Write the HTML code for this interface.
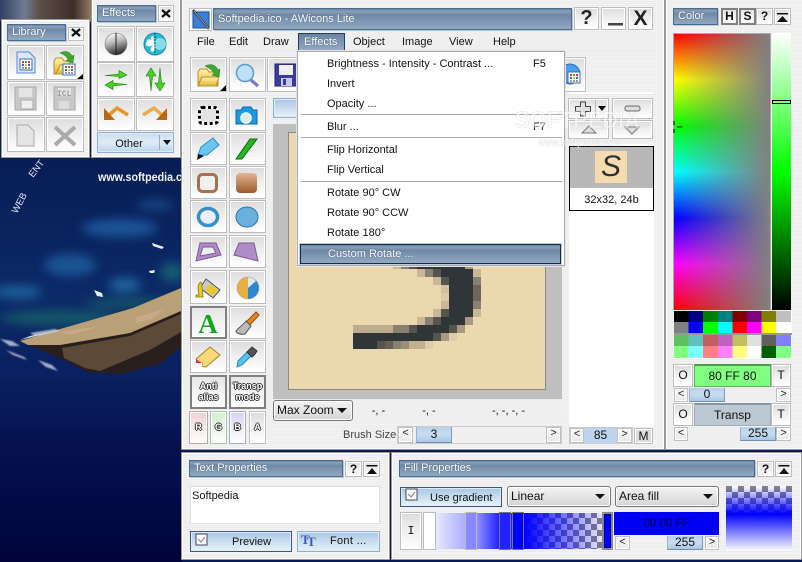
<!DOCTYPE html>
<html><head><meta charset="utf-8"><title>AWicons Lite</title>
<style>
html,body{margin:0;padding:0;width:802px;height:562px;overflow:hidden;background:#0a1a55}
body{position:relative;font:11px/14px "Liberation Sans",sans-serif;color:#111}
div,span.a{position:absolute;box-sizing:border-box}
.p{background:repeating-linear-gradient(#ececec 0 1px,#f3f3f3 1px 2px);border:1px solid #999;box-shadow:inset 0 0 0 1px #fff}
.b{background:linear-gradient(#dcdcdc,#ececec 40%,#fff);border:1px solid #bdbdbd;box-shadow:inset 0 0 0 1px #fff;text-align:center}
.d{border:2px solid #808080;box-shadow:none;background:linear-gradient(#e6e6e6,#fff)}
.t{background:linear-gradient(#6a84a2,#8ba0b8 12%,#6f88a6 30%,#7f97b2 60%,#93a8c0);border:1px solid #4a6c8f;box-shadow:1px 1px 0 #b8c8d8;color:#fff;padding-left:4px;text-shadow:0 0 1px #2b4a6c;white-space:nowrap;overflow:hidden}
.s{background:#efefef}
.ar{background:linear-gradient(#f8f8f8,#e8e8e8);border:1px solid #c0c0c0;box-shadow:inset 0 0 0 1px #fff;text-align:center;font-family:"Liberation Mono",monospace;font-size:11px;line-height:13px;color:#222}
.th{background:linear-gradient(#b9d2ea,#c9dcf0 50%,#aac6e4);border-bottom:1px solid #6f90b4;border-left:1px solid #aac;border-right:1px solid #7d9cbc;text-align:center;font-size:12px;line-height:14px}
.bl{background:linear-gradient(#a9c6e4,#cfe1f0 60%,#e6f3fa);border:1px solid #8fb0cc;box-shadow:inset 0 0 0 1px #dcebf6;text-align:center}
.cb{background:linear-gradient(#f4f4f4,#d4d4d4);border:1px solid #777;border-radius:3px;box-shadow:inset 0 0 0 1px #fff;padding-left:3px;font-size:12px;line-height:19px}
.cb i{position:absolute;right:5px;top:7px;width:0;height:0;border:5px solid transparent;border-top:5px solid #111;border-bottom:0}
.m{left:29px;white-space:nowrap}
.sep{left:3px;width:261px;height:1px;background:#aaa}
.o{color:#fff;font-weight:bold;font-size:9px;line-height:11px;text-shadow:-1px 0 0 #333,1px 0 0 #333,0 -1px 0 #333,0 1px 0 #333}
.tb{font-weight:bold;font-family:"Liberation Sans",sans-serif;font-size:14px;line-height:14px}
</style></head><body>

<!-- desktop wallpaper -->
<svg width="802" height="562" style="position:absolute;left:0;top:0">
<defs>
<linearGradient id="w" x1="0" y1="0" x2="0" y2="1"><stop offset="0" stop-color="#071c54"/><stop offset=".36" stop-color="#0c2a68"/><stop offset=".55" stop-color="#0a2060"/><stop offset=".73" stop-color="#051050"/><stop offset="1" stop-color="#00043a"/></linearGradient>
<filter id="bl" color-interpolation-filters="sRGB"><feGaussianBlur stdDeviation="5"/></filter><filter id="bs" color-interpolation-filters="sRGB"><feGaussianBlur stdDeviation=".7"/></filter>
<linearGradient id="rk" x1="0" y1="0" x2="1" y2="0"><stop offset="0" stop-color="#2f3f60"/><stop offset=".25" stop-color="#6f7c92"/><stop offset=".4" stop-color="#5c5048"/><stop offset=".75" stop-color="#3f2c2c"/><stop offset="1" stop-color="#b09a70"/></linearGradient>
</defs>
<rect x="0" y="150" width="182" height="412" fill="url(#w)"/>
<rect x="0" y="0" width="98" height="22" fill="url(#rk)"/>
<g filter="url(#bl)">
<ellipse cx="70" cy="265" rx="26" ry="11" fill="#1f5fa0" opacity=".8"/>
<ellipse cx="120" cy="228" rx="38" ry="9" fill="#1f62a4" opacity=".8"/>
<ellipse cx="155" cy="205" rx="18" ry="5" fill="#1f5a98" opacity=".7"/>
<ellipse cx="125" cy="285" rx="16" ry="7" fill="#2470a8" opacity=".85"/>
<ellipse cx="18" cy="292" rx="24" ry="7" fill="#1f66a0" opacity=".85"/>
<ellipse cx="60" cy="318" rx="60" ry="8" fill="#15566a"/>
<ellipse cx="130" cy="303" rx="45" ry="5" fill="#15566a"/>
<ellipse cx="172" cy="272" rx="12" ry="10" fill="#165a74"/>
</g>
<path d="M20 341L67 327 133 308 181 288V347L160 364 120 374 87 372 60 358 38 349Z" fill="#2a1e1c"/>
<path d="M20 341L67 327 133 308 181 288V311L130 333 60 345 28 345Z" fill="#b9a076"/>
<path d="M135 318l30-10-10 10-18 5zM60 332l40-6-30 9z" fill="#c8a888"/>
<path d="M62 348L130 336 181 314V332L150 350 100 371 85 368 64 358Z" fill="#5c4a38"/>
<g fill="#c8d4de" filter="url(#bs)" opacity=".8"><path d="M0 339l12 2 8 5-10 0z"/><path d="M6 350l18 7 3 3-14-5z"/><path d="M38 360l14 5 6 6-12-4z"/><path d="M30 333l25-4 5 2-25 5z"/></g>
<path d="M20 340L60 330 30 336Z" fill="#dde"/>
<g fill="#e8eef2"><path d="M94 290l8 3 1 4-6-1z"/><path d="M152 243l12 4-2 2-9-3z"/><path d="M149 271l6-1-1 3-4 0z"/></g>
<text x="98" y="181" fill="#fff" font-family="Liberation Sans" font-size="12" font-weight="bold" textLength="100" lengthAdjust="spacingAndGlyphs" opacity=".95">www.softpedia.com</text>
<text transform="translate(17,214) rotate(-62)" fill="#dfe6f0" font-family="Liberation Sans" font-size="9.5">WEB</text>
<text transform="translate(33,178) rotate(-52)" fill="#dfe6f0" font-family="Liberation Sans" font-size="9.5">ENT</text>
</svg>

<!-- Library panel -->
<div class="p" style="left:1px;top:19px;width:89px;height:139px"></div>
<div class="t" style="left:7px;top:24px;width:59px;height:17px">Library</div>
<div class="b" style="left:68px;top:27px;width:16px;height:14px"></div>
<div class="b" style="left:7px;top:45px;width:38px;height:35px"></div>
<div class="b" style="left:46px;top:45px;width:38px;height:35px"></div>
<div class="b" style="left:7px;top:81px;width:38px;height:35px"></div>
<div class="b" style="left:46px;top:81px;width:38px;height:35px"></div>
<div class="b" style="left:7px;top:117px;width:38px;height:35px"></div>
<div class="b" style="left:46px;top:117px;width:38px;height:35px"></div>

<!-- Effects panel -->
<div class="p" style="left:91px;top:-2px;width:90px;height:160px"></div>
<div class="t" style="left:97px;top:5px;width:59px;height:17px">Effects</div>
<div class="b" style="left:158px;top:5px;width:16px;height:17px"></div>
<div class="b" style="left:97px;top:26px;width:38px;height:36px"></div>
<div class="b" style="left:136px;top:26px;width:38px;height:36px"></div>
<div class="b" style="left:97px;top:62px;width:38px;height:35px"></div>
<div class="b" style="left:136px;top:62px;width:38px;height:35px"></div>
<div class="b" style="left:97px;top:98px;width:38px;height:33px"></div>
<div class="b" style="left:136px;top:98px;width:38px;height:33px"></div>
<div class="bl" style="left:97px;top:132px;width:77px;height:21px;line-height:20px;background:linear-gradient(#c9def0,#dfecf6 50%,#b9d2e9)"><span style="position:absolute;left:0;width:62px;text-align:center;top:1px">Other</span></div>
<div style="left:159px;top:135px;width:1px;height:15px;background:#8fb0cc"></div>

<!-- main window -->
<div class="p" style="left:181px;top:-2px;width:484px;height:452px"></div>
<div class="b" style="left:189px;top:8px;width:23px;height:23px"></div>
<div class="t" style="left:213px;top:8px;width:359px;height:22px;line-height:20px;font-size:11px">Softpedia.ico - AWicons Lite</div>
<div class="b" style="left:574px;top:7px;width:25px;height:23px;font:bold 20px/21px 'Liberation Sans';color:#222">?</div>
<div class="b" style="left:601px;top:7px;width:25px;height:23px"></div>
<div class="b" style="left:628px;top:7px;width:25px;height:23px;font:bold 21px/21px 'Liberation Sans';color:#222">X</div>
<div class="s" style="left:190px;top:32px;width:462px;height:19px"></div>
<span class="a" style="left:197px;top:35px">File</span>
<span class="a" style="left:229px;top:35px">Edit</span>
<span class="a" style="left:263px;top:35px">Draw</span>
<div class="t" style="left:298px;top:33px;width:47px;height:18px;border:1px solid #1e3e62;padding-left:5px;line-height:16px;box-shadow:none;background:linear-gradient(#6a84a2,#7f97b2 50%,#93a8c0)">Effects</div>
<span class="a" style="left:353px;top:35px">Object</span>
<span class="a" style="left:402px;top:35px">Image</span>
<span class="a" style="left:449px;top:35px">View</span>
<span class="a" style="left:493px;top:35px">Help</span>

<!-- top toolbar -->
<div class="b" style="left:190px;top:57px;width:37px;height:35px"></div>
<div class="b" style="left:229px;top:57px;width:37px;height:35px"></div>
<div class="b" style="left:267px;top:57px;width:38px;height:35px"></div>
<div class="b" style="left:548px;top:57px;width:38px;height:35px"></div>

<!-- tools -->
<div class="b" style="left:190px;top:98px;width:37px;height:33px"></div><div class="b" style="left:229px;top:98px;width:37px;height:33px"></div>
<div class="b" style="left:190px;top:132px;width:37px;height:33px"></div><div class="b" style="left:229px;top:132px;width:37px;height:33px"></div>
<div class="b" style="left:190px;top:166px;width:37px;height:33px"></div><div class="b" style="left:229px;top:166px;width:37px;height:33px"></div>
<div class="b" style="left:190px;top:200px;width:37px;height:33px"></div><div class="b" style="left:229px;top:200px;width:37px;height:33px"></div>
<div class="b" style="left:190px;top:235px;width:37px;height:33px"></div><div class="b" style="left:229px;top:235px;width:37px;height:33px"></div>
<div class="b" style="left:190px;top:270px;width:37px;height:34px"></div><div class="b" style="left:229px;top:270px;width:37px;height:34px"></div>
<div class="b d" style="left:190px;top:306px;width:37px;height:33px"></div><div class="b" style="left:229px;top:306px;width:37px;height:33px"></div>
<div class="b" style="left:190px;top:340px;width:37px;height:33px"></div><div class="b" style="left:229px;top:340px;width:37px;height:33px"></div>
<div class="b d o" style="left:190px;top:375px;width:37px;height:34px;padding-top:4px">Anti<br>alias</div>
<div class="b d o" style="left:229px;top:375px;width:37px;height:34px;padding-top:4px">Transp<br>mode</div>
<div class="b o" style="left:189px;top:411px;width:19px;height:33px;padding-top:10px;background:linear-gradient(#f0d0d0,#fff);border-color:#c8a0a0">R</div>
<div class="b o" style="left:210px;top:411px;width:17px;height:33px;padding-top:10px;background:linear-gradient(#d0f0d0,#fff);border-color:#a8c8a8">G</div>
<div class="b o" style="left:229px;top:411px;width:17px;height:33px;padding-top:10px;background:linear-gradient(#d4d4f0,#fff);border-color:#a8a8c8">B</div>
<div class="b o" style="left:249px;top:411px;width:17px;height:33px;padding-top:10px">A</div>

<!-- canvas -->
<div class="bl" style="left:273px;top:98px;width:100px;height:20px"></div>
<div style="left:273px;top:124px;width:289px;height:275px;background:#bfbfbf"></div>
<div style="left:288px;top:132px;width:258px;height:258px;background:#ecd8ae;border:1px solid #8a8a80"></div>
<svg width="802" height="562" style="position:absolute;left:0;top:0" shape-rendering="crispEdges">
<g fill="#303538">
<rect x="417" y="261" width="48" height="8"/><rect x="441" y="269" width="32" height="8"/><rect x="449" y="277" width="24" height="40"/><rect x="441" y="317" width="24" height="8"/><rect x="417" y="325" width="32" height="8"/><rect x="353" y="333" width="80" height="8"/><rect x="353" y="341" width="24" height="8"/>
</g>
<g fill="#c9b795">
<rect x="393" y="261" width="8" height="8"/><rect x="417" y="269" width="8" height="8"/><rect x="433" y="277" width="8" height="8"/><rect x="441" y="285" width="8" height="8" opacity=".7"/><rect x="441" y="293" width="8" height="8" opacity=".4"/><rect x="441" y="301" width="8" height="8"/><rect x="433" y="309" width="8" height="8"/><rect x="417" y="317" width="8" height="8"/><rect x="473" y="269" width="8" height="8"/><rect x="473" y="309" width="8" height="8"/><rect x="409" y="341" width="8" height="8" fill="#c3b090"/>
</g>
<rect x="353" y="325" width="40" height="8" fill="#bdad8e"/>
<g fill="#8a8070">
<rect x="401" y="261" width="8" height="8"/><rect x="425" y="269" width="8" height="8"/><rect x="473" y="277" width="8" height="8"/><rect x="473" y="301" width="8" height="8"/><rect x="425" y="317" width="8" height="8"/><rect x="393" y="325" width="16" height="8"/><rect x="401" y="341" width="8" height="8" fill="#9a8e78"/><rect x="393" y="341" width="8" height="8"/>
</g>
<g fill="#a89a80"><rect x="465" y="261" width="8" height="8"/><rect x="465" y="317" width="8" height="8"/><rect x="457" y="325" width="8" height="8"/><rect x="441" y="333" width="8" height="8"/></g>
<g fill="#56544e">
<rect x="409" y="261" width="8" height="8"/><rect x="433" y="269" width="8" height="8"/><rect x="441" y="277" width="8" height="8"/><rect x="441" y="309" width="8" height="8"/><rect x="433" y="317" width="8" height="8"/><rect x="409" y="325" width="8" height="8"/><rect x="449" y="325" width="8" height="8"/><rect x="433" y="333" width="8" height="8"/><rect x="377" y="341" width="8" height="8"/>
</g>
<rect x="473" y="285" width="8" height="16" fill="#6b675c"/>
<rect x="385" y="341" width="8" height="8" fill="#666055"/><rect x="377" y="341" width="8" height="8" fill="#56544e"/>
<rect x="449" y="333" width="8" height="8" fill="#dfcba5"/><rect x="417" y="341" width="8" height="8" fill="#c3b090"/><rect x="425" y="341" width="8" height="8" fill="#dfcba5"/>
</svg>

<!-- statusbar -->
<div class="cb" style="left:273px;top:400px;width:80px;height:21px">Max Zoom<i></i></div>
<div class="s" style="left:354px;top:400px;width:49px;height:21px;text-align:center;line-height:22px">-, -</div>
<div class="s" style="left:404px;top:400px;width:50px;height:21px;text-align:center;line-height:22px">-, -</div>
<div class="s" style="left:455px;top:400px;width:107px;height:21px;text-align:center;line-height:22px">-, -, -, -</div>
<span class="a" style="left:343px;top:428px;color:#444;font-size:11px">Brush Size</span>
<div class="s" style="left:397px;top:426px;width:165px;height:18px;border:1px solid #ccc"></div>
<div class="ar" style="left:398px;top:427px;width:15px;height:16px">&lt;</div>
<div class="th" style="left:416px;top:427px;width:36px;height:16px">3</div>
<div class="ar" style="left:546px;top:427px;width:15px;height:16px">&gt;</div>

<!-- right list -->
<div style="left:569px;top:92px;width:85px;height:335px;background:#fff"></div>
<div class="p" style="left:566px;top:94px;width:90px;height:50px;border:0;box-shadow:none"></div>
<div class="b" style="left:568px;top:98px;width:41px;height:21px"></div>
<div class="b" style="left:612px;top:98px;width:41px;height:21px"></div>
<div class="b" style="left:568px;top:120px;width:41px;height:19px"></div>
<div class="b" style="left:612px;top:120px;width:41px;height:19px"></div>
<div style="left:569px;top:146px;width:85px;height:65px;background:#fff;border:1px solid #000"></div>
<div style="left:570px;top:147px;width:83px;height:41px;background:#b8b8b8"></div>
<div style="left:595px;top:151px;width:32px;height:32px;background:#f5dbae;font:italic 30px/32px 'Liberation Sans';text-align:center;color:#2d3034">S</div>
<div style="left:570px;top:193px;width:83px;text-align:center;font-size:11px">32x32, 24b</div>
<div class="s" style="left:569px;top:427px;width:64px;height:17px;border:1px solid #ccc"></div>
<div class="ar" style="left:570px;top:428px;width:14px;height:15px">&lt;</div>
<div style="left:584px;top:428px;width:33px;height:15px;background:#bcd4ee;text-align:center;font-size:12px;line-height:15px">85</div>
<div class="ar" style="left:617px;top:428px;width:15px;height:15px">&gt;</div>
<div class="b" style="left:634px;top:428px;width:19px;height:16px;background:#dcdcdc;font-size:12px;line-height:14px">M</div>

<!-- Color panel -->
<div class="p" style="left:665px;top:-2px;width:139px;height:452px"></div>
<div class="t" style="left:673px;top:8px;width:45px;height:17px">Color</div>
<div class="b d tb" style="left:721px;top:8px;width:17px;height:17px;font-size:12px;line-height:13px">H</div>
<div class="b d tb" style="left:739px;top:8px;width:17px;height:17px;font-size:12px;line-height:13px">S</div>
<div class="b tb" style="left:756px;top:8px;width:17px;height:17px;font-size:12px;line-height:15px">?</div>
<div class="b" style="left:774px;top:8px;width:17px;height:17px"></div>
<div style="left:673px;top:33px;width:98px;height:277px;background:linear-gradient(90deg,transparent,#808080),linear-gradient(#f00,#ff0 16.6%,#0f0 33.3%,#0ff 50%,#00f 66.6%,#f0f 83.3%,#f00);border:1px solid #aaa;border-width:1px 1px 0 1px"></div>
<div style="left:772px;top:33px;width:19px;height:277px;background:linear-gradient(#fff,#0f0 50%,#000)"></div>
<div style="left:772px;top:100px;width:19px;height:4px;border:1px solid #000;background:#80ff80"></div>
<svg width="10" height="14" style="position:absolute;left:673px;top:120px"><path d="M1 1v4M1 9v4M4 7h5" stroke="#000" fill="none"/></svg>
<!-- palette -->
<svg width="118" height="48" style="position:absolute;left:674px;top:311px" shape-rendering="crispEdges">
<rect width="118" height="48" fill="#fff"/>
<g><rect x="0" width="15" height="11" fill="#000"/><rect x="14.6" width="15" height="11" fill="#000080"/><rect x="29.2" width="15" height="11" fill="#008000"/><rect x="43.8" width="15" height="11" fill="#008080"/><rect x="58.4" width="15" height="11" fill="#800000"/><rect x="73" width="15" height="11" fill="#800080"/><rect x="87.6" width="15" height="11" fill="#808000"/><rect x="102.2" width="15" height="11" fill="#c0c0c0"/></g>
<g transform="translate(0,11)"><rect x="0" width="15" height="11" fill="#808080"/><rect x="14.6" width="15" height="11" fill="#00f"/><rect x="29.2" width="15" height="11" fill="#0f0"/><rect x="43.8" width="15" height="11" fill="#0ff"/><rect x="58.4" width="15" height="11" fill="#f00"/><rect x="73" width="15" height="11" fill="#f0f"/><rect x="87.6" width="15" height="11" fill="#ff0"/><rect x="102.2" width="15" height="11" fill="#fff"/></g>
<rect y="22" width="118" height="2" fill="#999"/>
<g transform="translate(0,24)"><rect x="0" width="15" height="11" fill="#60c060"/><rect x="14.6" width="15" height="11" fill="#60c0c0"/><rect x="29.2" width="15" height="11" fill="#c06060"/><rect x="43.8" width="15" height="11" fill="#c060c0"/><rect x="58.4" width="15" height="11" fill="#c0c060"/><rect x="73" width="15" height="11" fill="#e0e0e0"/><rect x="87.6" width="15" height="11" fill="#606060"/><rect x="102.2" width="15" height="11" fill="#8080ff"/></g>
<g transform="translate(0,35)"><rect x="0" width="15" height="12" fill="#80ff80"/><rect x="14.6" width="15" height="12" fill="#80ffff"/><rect x="29.2" width="15" height="12" fill="#ff8080"/><rect x="43.8" width="15" height="12" fill="#ff80ff"/><rect x="58.4" width="15" height="12" fill="#ffff80"/><rect x="73" width="15" height="12" fill="#fff"/><rect x="87.6" width="15" height="12" fill="#006000"/><rect x="102.2" width="15" height="12" fill="#80ff80"/></g>
</svg>
<div class="b" style="left:673px;top:364px;width:20px;height:23px;font-size:12px;line-height:20px">O</div>
<div style="left:694px;top:364px;width:77px;height:23px;background:#80ff80;border:1px solid #60b060;border-top:2px solid #4d9a4d;text-align:center;font-size:12px;line-height:21px">80 FF 80</div>
<div class="b" style="left:771px;top:364px;width:20px;height:23px;font-size:12px;line-height:20px">T</div>
<div class="s" style="left:673px;top:388px;width:118px;height:14px"></div>
<div class="ar" style="left:674px;top:388px;width:14px;height:14px;line-height:12px">&lt;</div>
<div class="th" style="left:689px;top:388px;width:36px;height:14px;line-height:13px">0</div>
<div class="ar" style="left:776px;top:388px;width:15px;height:14px;line-height:12px">&gt;</div>
<div class="b" style="left:673px;top:403px;width:20px;height:23px;font-size:12px;line-height:20px">O</div>
<div style="left:694px;top:403px;width:77px;height:23px;background:#bcc8d2;border:1px solid #a0acb8;border-top:2px solid #8595a5;text-align:center;font-size:12px;line-height:21px">Transp</div>
<div class="b" style="left:771px;top:403px;width:20px;height:23px;font-size:12px;line-height:20px">T</div>
<div class="s" style="left:673px;top:427px;width:118px;height:14px"></div>
<div class="ar" style="left:674px;top:427px;width:14px;height:14px;line-height:12px">&lt;</div>
<div class="th" style="left:740px;top:427px;width:36px;height:14px;line-height:13px">255</div>
<div class="ar" style="left:776px;top:427px;width:15px;height:14px;line-height:12px">&gt;</div>

<!-- Text Properties -->
<div class="p" style="left:181px;top:452px;width:209px;height:108px"></div>
<div class="t" style="left:189px;top:460px;width:154px;height:17px">Text Properties</div>
<div class="b tb" style="left:345px;top:461px;width:17px;height:16px;font-size:12px;line-height:14px">?</div>
<div class="b" style="left:363px;top:461px;width:17px;height:16px"></div>
<div style="left:190px;top:486px;width:190px;height:38px;background:#fff;border:1px solid #e0e0e0;padding:2px 1px;font-size:11px">Softpedia</div>
<div class="bl" style="left:190px;top:531px;width:102px;height:21px;border:1px solid #3a5a78;background:linear-gradient(#a9c6e4,#d0e2f0 60%,#e6f3fa)"><span style="position:absolute;left:41px;top:3px;white-space:nowrap">Preview</span></div>
<div class="bl" style="left:297px;top:531px;width:83px;height:21px"><span style="position:absolute;left:32px;top:2px;white-space:nowrap;letter-spacing:.3px">Font ...</span></div>

<!-- Fill Properties -->
<div class="p" style="left:391px;top:452px;width:411px;height:108px"></div>
<div class="t" style="left:399px;top:460px;width:356px;height:17px">Fill Properties</div>
<div class="b tb" style="left:757px;top:461px;width:17px;height:16px;font-size:12px;line-height:14px">?</div>
<div class="b" style="left:775px;top:461px;width:17px;height:16px"></div>
<div class="bl" style="left:400px;top:487px;width:102px;height:20px;border:1px solid #3a5a78;background:linear-gradient(#a9c6e4,#d0e2f0 60%,#e6f3fa)"><span style="position:absolute;left:29px;top:3px;white-space:nowrap">Use gradient</span></div>
<div class="cb" style="left:507px;top:486px;width:104px;height:21px">Linear<i></i></div>
<div class="cb" style="left:615px;top:486px;width:104px;height:21px">Area fill<i></i></div>
<svg width="66" height="65" style="position:absolute;left:726px;top:486px" shape-rendering="crispEdges">
<defs><pattern id="ck" width="12" height="12" patternUnits="userSpaceOnUse"><rect width="12" height="12" fill="#fff"/><rect width="6" height="6" fill="#888"/><rect x="6" y="6" width="6" height="6" fill="#888"/></pattern>
<linearGradient id="vg" x1="0" y1="0" x2="0" y2="1"><stop offset="0" stop-color="#00f" stop-opacity="0"/><stop offset="1" stop-color="#00f"/></linearGradient>
<linearGradient id="vg2" x1="0" y1="0" x2="0" y2="1"><stop offset="0" stop-color="#00f"/><stop offset="1" stop-color="#fff"/></linearGradient></defs>
<rect width="66" height="28" fill="url(#ck)"/><rect width="66" height="28" fill="url(#vg)"/>
<rect y="28" width="66" height="37" fill="url(#vg2)"/>
</svg>
<div class="b tb" style="left:400px;top:512px;width:22px;height:38px;font:12px/36px 'Liberation Mono'">I</div>
<svg width="192" height="39" style="position:absolute;left:423px;top:512px" shape-rendering="crispEdges">
<defs><linearGradient id="g1" x1="0" y1="0" x2="1" y2="0"><stop offset="0" stop-color="#e8e8ff"/><stop offset="1" stop-color="#aaaaff"/></linearGradient><linearGradient id="g2" x1="0" y1="0" x2="1" y2="0"><stop offset="0" stop-color="#9090ff"/><stop offset="1" stop-color="#2222ff"/></linearGradient>
<linearGradient id="g3" x1="0" y1="0" x2="1" y2="0"><stop offset="0" stop-color="#00f"/><stop offset="1" stop-color="#00f" stop-opacity=".1"/></linearGradient>
<pattern id="ck2" width="12" height="12" patternUnits="userSpaceOnUse"><rect width="12" height="12" fill="#fff"/><rect width="6" height="6" fill="#888"/><rect x="6" y="6" width="6" height="6" fill="#888"/></pattern></defs>
<rect x=".5" y=".5" width="12" height="37" fill="#fff" stroke="#bbb"/>
<rect x="13" y="1" width="30" height="36" fill="url(#g1)"/>
<rect x="42.5" y=".5" width="11" height="37" fill="#8888ff" stroke="#bbb"/>
<rect x="54" y="1" width="22" height="36" fill="url(#g2)"/>
<rect x="76.5" y=".5" width="11" height="37" fill="#2222ff" stroke="#777"/>
<rect x="88" y="1" width="1" height="36" fill="#2222ff"/>
<rect x="89.5" y=".5" width="11" height="37" fill="#0000ff" stroke="#777"/>
<rect x="101" y="1" width="78" height="36" fill="url(#ck2)"/>
<rect x="101" y="1" width="78" height="36" fill="url(#g3)"/>
<rect x="179.5" y=".5" width="10" height="37" fill="#fff" stroke="#888"/>
<rect x="181" y="2" width="7" height="34" fill="#00f" stroke="#003"/>
</svg>
<div style="left:614px;top:512px;width:105px;height:23px;background:#0000f4;text-align:center;font-size:11.5px;line-height:24px;color:#000048">00 00 FF</div>
<div class="ar" style="left:615px;top:536px;width:15px;height:14px;line-height:12px">&lt;</div>
<div class="th" style="left:667px;top:536px;width:36px;height:14px;line-height:13px">255</div>
<div class="ar" style="left:705px;top:536px;width:14px;height:14px;line-height:12px">&gt;</div>

<!-- icons overlay -->
<svg width="802" height="562" style="position:absolute;left:0;top:0">
<defs>
<linearGradient id="sil" x1=".3" y1="0" x2=".6" y2="1"><stop offset="0" stop-color="#fff"/><stop offset=".4" stop-color="#bbb"/><stop offset="1" stop-color="#222"/></linearGradient>
<linearGradient id="fol" x1="0" y1="0" x2="0" y2="1"><stop offset="0" stop-color="#fff2a8"/><stop offset="1" stop-color="#e2b23a"/></linearGradient>
<linearGradient id="brn" x1="0" y1="0" x2="0" y2="1"><stop offset="0" stop-color="#e4b492"/><stop offset="1" stop-color="#9c5c30"/></linearGradient>
<g id="grid"><rect width="12" height="11" fill="#fff" stroke="#3b6fb5"/><g><rect x="2" y="2" width="2" height="2" fill="#e33"/><rect x="5" y="2" width="2" height="2" fill="#3a3"/><rect x="8" y="2" width="2" height="2" fill="#e33"/><rect x="2" y="5" width="2" height="2" fill="#36c"/><rect x="5" y="5" width="2" height="2" fill="#fb2"/><rect x="8" y="5" width="2" height="2" fill="#36c"/><rect x="2" y="8" width="2" height="2" fill="#999"/><rect x="5" y="8" width="2" height="2" fill="#999"/><rect x="8" y="8" width="2" height="2" fill="#999"/></g></g>
</defs>
<!-- close X -->
<path d="M72 29l8 7M80 29l-8 7M162 10l8 7M170 10l-8 7" stroke="#111" stroke-width="2.2" fill="none"/>
<!-- library -->
<path d="M17 52h12l6 6v15h-18z" fill="#dbe7fb" stroke="#5b85d8"/><use href="#grid" x="20" y="59"/>
<path d="M54 61l2-3h6l2 3h6v13h-16z" fill="url(#fol)" stroke="#b8902c"/><path d="M56 74l4-9h15l-3 9z" fill="url(#fol)" stroke="#b8902c"/>
<path d="M60 53c6-3 10-1 12 3l2-1-1 8-7-2 2-2c-2-3-5-5-8-6z" fill="#3ea82a" stroke="#2b7a1c" stroke-width=".5"/>
<use href="#grid" transform="translate(63,64)"/>
<path d="M83 74v5h-6z" fill="#000"/>
<g fill="#c8c8c8" stroke="#aaa"><path d="M15 87h21v23h-21z"/><path d="M54 87h21v23h-21z"/><path d="M17 125h11l6 6v15h-17z" fill="#e4e4e4"/></g>
<rect x="19" y="88" width="13" height="9" fill="#e4e4e4"/><rect x="21" y="100" width="12" height="9" fill="#eee" stroke="#aaa"/>
<rect x="58" y="88" width="13" height="8" fill="#e4e4e4"/><text x="57" y="96" font-family="Liberation Mono" font-size="8" font-weight="bold" fill="#999">ICL</text><rect x="59" y="101" width="10" height="8" fill="#ddd"/>
<path d="M55 127l20 18M75 127l-20 18" stroke="#aaa" stroke-width="4" fill="none"/>
<!-- effects -->
<circle cx="116" cy="44" r="11" fill="url(#sil)" stroke="#777" stroke-width=".6"/><path d="M116 33v22" stroke="#222" stroke-width="1"/>
<circle cx="155" cy="44" r="11" fill="#2ab8d8" stroke="#1e8aac"/><circle cx="160" cy="44" r="6" fill="#8adcea"/><path d="M155 33v22" stroke="#0a5a7a" stroke-dasharray="2 1"/><path d="M147 40c4-2 6 1 7 4-3 3-7 3-8 1zM154 44c-3 3-5 6-2 8 3-1 3-4 2-8zM152 36c1-1 2 1 2 7-2-1-4-5-2-7z" fill="#fff"/>
<g fill="#44d422" stroke="#1d7a10" stroke-width=".6"><path d="M105 75.500l14-1.500v-3.500l8 4.500-8 3.500v-2z"/><path d="M127 84.500l-14 1.500v3.500l-8-4.500 8-4.500v2.500z"/>
<path d="M151 91l-1.500-15-3.500 0 5-8 5 8h-3.500z"/><path d="M160 68l1.500 15 3.500 0-5 8-5-8 3.500 0z"/></g>
<path d="M109 115l8-7 11 7" fill="none" stroke="#e8962c" stroke-width="3.500"/><path d="M104 108v12h11z" fill="#b86a10"/>
<path d="M162 115l-8-7-11 7" fill="none" stroke="#f0a84c" stroke-width="3.500"/><path d="M167 108v12h-11z" fill="#b86a10"/>
<path d="M163 140h8l-4 5z" fill="#111"/>
<!-- window icon -->
<rect x="193" y="12" width="16" height="16" fill="#3a7fd8" stroke="#1e4e9c"/><path d="M193 10l16 19" stroke="#333" stroke-width="2.2"/><path d="M194 11l15 18" stroke="#bbb" stroke-width=".7"/>
<rect x="608" y="23" width="15" height="2.500" fill="#444"/>
<!-- toolbar -->
<path d="M198 72l2-3h7l2 3h9v14h-20z" fill="url(#fol)" stroke="#b8902c"/><path d="M198 86l4-9h17l-3 9z" fill="url(#fol)" stroke="#b8902c"/>
<path d="M205 66c6-3 11-1 13 4l2-1-1 8-7-2 2-2c-2-3-5-5-9-7z" fill="#3ea82a" stroke="#2b7a1c" stroke-width=".5"/>
<path d="M226 85v6h-6z" fill="#000"/>
<circle cx="245" cy="73" r="8.500" fill="#bfe0f8" stroke="#5b9fd8" stroke-width="1.600"/><path d="M251 80l7 6" stroke="#7c78c8" stroke-width="3.200"/>
<path d="M275 64h22v22h-22z" fill="#3b3b9c" stroke="#222272"/><rect x="279" y="65" width="14" height="10" fill="#eee"/><rect x="281" y="78" width="11" height="8" fill="#c8c8e8"/><rect x="283" y="79" width="3" height="6" fill="#3b3b9c"/>
<circle cx="570" cy="74" r="10" fill="#4aa0e8" stroke="#2a6ab8"/><use href="#grid" x="568" y="72"/>
<!-- tools -->
<rect x="199.500" y="107.500" width="18" height="16" rx="3" fill="#e4e4e4" stroke="#fff" stroke-width="3"/><rect x="199.500" y="107.500" width="18" height="16" rx="3" fill="none" stroke="#000" stroke-width="3" stroke-dasharray="3 2.500"/>
<path d="M236 110h5l2-3h8l2 3h4v14h-21z" fill="#1a9ae0" stroke="#0a6ab0"/><circle cx="246" cy="118" r="5" fill="#d8eefa" stroke="#fff" stroke-width="1.500"/>
<path d="M198 155l3-8 12-9 6 7-12 10z" fill="#6cc4f0" stroke="#2a8ac8"/><path d="M197 160l1-6 6 2z" fill="#111"/>
<path d="M236 159l14-20h7l-15 20z" fill="#2cb024" stroke="#0a700a"/>
<rect x="198.500" y="174.500" width="18" height="17" rx="4" fill="#f0f0f0" stroke="#a8704c" stroke-width="3"/>
<rect x="236" y="173" width="21" height="20" rx="4" fill="url(#brn)"/>
<ellipse cx="208" cy="217" rx="9.500" ry="8.500" fill="#eef" stroke="#3a90c8" stroke-width="3.500"/>
<ellipse cx="247" cy="217" rx="11" ry="10" fill="#6ab0dc" stroke="#2a7ab0"/>
<path d="M200 243h16l5 12-25 6z M203 247l-3 9 16-3-3-6z" fill="#b08cc4" stroke="#7a5a98" fill-rule="evenodd"/>
<path d="M239 243h15l4 18-24-6z" fill="#b08cc4" stroke="#7a5a98"/>
<path d="M206 279l14 11-7 8-13-10z" fill="#c8c8c8" stroke="#555"/><path d="M210 284l8 6-5 6-8-6z" fill="#e8c82c"/>
<path d="M201 282c-4 2-3 8-2 13h-3v2h7c-1-5 0-9-2-15z" fill="#e8c82c" stroke="#a08a1c"/>
<circle cx="248" cy="288" r="11" fill="#e8b040"/><path d="M248 277a11 11 0 0 1 0 22z" fill="#2a88d0"/><path d="M248 277a11 11 0 0 1 8 4l-8 7z" fill="#d8eaf8"/><circle cx="248" cy="288" r="11" fill="none" stroke="#999" stroke-width=".5"/>
<text x="208" y="333" text-anchor="middle" font-family="Liberation Serif" font-weight="bold" font-size="27" fill="#11a81a">A</text>
<path d="M245 323l11-11 3 3-10 11z" fill="#e08428" stroke="#a05010"/><path d="M246 321l5 5-6 8c-5 1-9-1-9-3 2-3 6-5 10-10z" fill="#bbb" stroke="#555"/>
<path d="M196 359l14-12 10 8-14 12-6-1z" fill="#f8d878" stroke="#a08a1c"/><path d="M196 359l7 5-3 3-4-4z" fill="#f02050"/><rect x="196" y="363" width="6" height="5" fill="#fff"/>
<path d="M238 361l9-9 4 4-9 9-5 2z" fill="#5ac0f0" stroke="#2a8ac8"/><path d="M247 352l5-5 5 4-2 3-3 3-5-5z" fill="#555" stroke="#333"/>
<!-- +/- -->
<path d="M580.500 102h5v4.500h5v5h-5v4.500h-5v-4.500h-5v-5h5z" fill="#e0e0e0" stroke="#444" stroke-linejoin="round"/>
<path d="M598 106h8l-4 5z" fill="#000"/><path d="M595 100h1v17h-1z" fill="#bbb"/>
<rect x="625" y="106" width="15" height="5" rx="2" fill="#ddd" stroke="#666"/>
<path d="M582 133l7-7 7 7z" fill="#ddd" stroke="#777"/><path d="M625 127h14l-7 7z" fill="#ddd" stroke="#777"/>
<path d="M777 13h11v1.500h-11z M777 22h11l-5.500-6z" fill="#111"/>
<path d="M366.500 465h11v1.500h-11z M367 474h10l-5-6z" fill="#111"/>
<path d="M778.500 465h11v1.500h-11z M779 474h10l-5-6z" fill="#111"/>
<!-- preview & gradient checks -->
<rect x="196" y="534" width="11" height="11" fill="#fff" stroke="#445"/><path d="M198 539l3 3 4-5" stroke="#888" fill="none" stroke-width="1.200"/>
<rect x="406" y="489" width="11" height="11" fill="#fff" stroke="#445"/><path d="M408 494l3 3 4-5" stroke="#888" fill="none" stroke-width="1.200"/>
<text x="301" y="544" font-family="Liberation Serif" font-size="13" font-weight="bold" fill="#3a5ab8">T</text><text x="307" y="546" font-family="Liberation Serif" font-size="13" font-weight="bold" fill="#3a5ab8">T</text>
</svg>

<!-- Effects menu -->
<div style="left:297px;top:51px;width:268px;height:215px;background:#fff;border:1px solid #a8a8a8;box-shadow:0 0 0 1px #e4e4e4">
<span class="a m" style="top:5px">Brightness - Intensity - Contrast ...</span><span class="a" style="left:235px;top:5px">F5</span>
<span class="a m" style="top:25px">Invert</span>
<span class="a m" style="top:45px">Opacity ...</span>
<div class="sep" style="top:62px"></div>
<span class="a m" style="top:68px">Blur ...</span><span class="a" style="left:235px;top:68px">F7</span>
<div class="sep" style="top:85px"></div>
<span class="a m" style="top:91px">Flip Horizontal</span>
<span class="a m" style="top:111px">Flip Vertical</span>
<div class="sep" style="top:129px"></div>
<span class="a m" style="top:134px">Rotate 90° CW</span>
<span class="a m" style="top:154px">Rotate 90° CCW</span>
<span class="a m" style="top:174px">Rotate 180°</span>
<div class="t" style="left:2px;top:192px;width:261px;height:20px;border:1px solid #152c48;box-shadow:0 0 0 1px #bcd;padding-left:27px;line-height:18px">Custom Rotate ...</div>
</div>

<!-- watermark -->
<svg width="802" height="562" style="position:absolute;left:0;top:0">
<text x="515" y="128" font-family="Liberation Sans" font-size="24" font-weight="bold" fill="#fff" stroke="#ccc" stroke-width=".6" textLength="125" lengthAdjust="spacingAndGlyphs" opacity=".55">SOFTPEDIA</text>
<text x="538" y="146" font-family="Liberation Sans" font-size="11" font-weight="bold" fill="#fff" stroke="#ccc" stroke-width=".4" textLength="83" lengthAdjust="spacingAndGlyphs" opacity=".6">www.softpedia.com</text>
</svg>
</body></html>
